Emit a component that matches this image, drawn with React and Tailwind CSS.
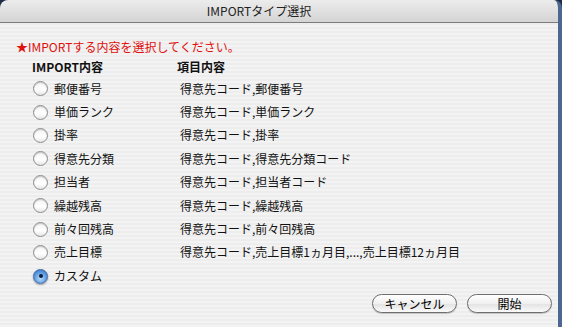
import React from 'react';

const rows = [
  ['郵便番号', '得意先コード,郵便番号'],
  ['単価ランク', '得意先コード,単価ランク'],
  ['掛率', '得意先コード,掛率'],
  ['得意先分類', '得意先コード,得意先分類コード'],
  ['担当者', '得意先コード,担当者コード'],
  ['繰越残高', '得意先コード,繰越残高'],
  ['前々回残高', '得意先コード,前々回残高'],
  ['売上目標', '得意先コード,売上目標1ヵ月目,...,売上目標12ヵ月目'],
];

function Radio({ checked }) {
  if (checked) {
    return (
      <span className="w-[15px] h-[15px] rounded-full border border-[#3a64a8] bg-[radial-gradient(circle_at_50%_65%,#b9dcfb_0%,#5d9be0_55%,#2f6cc0_100%)] shadow-[0_1px_2px_rgba(0,0,0,0.35)] flex items-center justify-center">
        <span className="w-[4px] h-[4px] rounded-full bg-[#0d1d3a]" />
      </span>
    );
  }
  return (
    <span className="w-[15px] h-[15px] rounded-full border border-[#8d8d8d] bg-[linear-gradient(to_bottom,#f4f4f4,#ffffff_60%,#e6e6e6)] shadow-[inset_0_1px_1px_rgba(0,0,0,0.2)]" />
  );
}

function Button({ children }) {
  return (
    <button className="w-[85px] h-[19px] rounded-full border border-[#6e6e6e] bg-[linear-gradient(to_bottom,#ffffff,#f0f0f0_50%,#e2e2e2_51%,#fafafa)] text-[12px] text-black flex items-center justify-center shadow-[0_1px_1px_rgba(0,0,0,0.2)]">
      {children}
    </button>
  );
}

export default function App() {
  return (
    <div
      className="w-[562px] h-[327px] bg-[#1d2b45] overflow-hidden"
      style={{ fontFamily: '"Noto Sans CJK JP", "Liberation Sans", sans-serif' }}
    >
      <div className="h-full flex flex-col rounded-t-[8px] overflow-hidden border-r-[4px] border-[#4c6790]">
        <div className="h-[23px] shrink-0 bg-[linear-gradient(to_bottom,#ececec,#d4d4d4)] border-b border-[#7c7c7c] flex items-center justify-center pr-[40px] text-[12px] text-[#222]">
          IMPORTタイプ選択
        </div>
        <div className="flex-1 bg-[repeating-linear-gradient(to_bottom,#ededed_0px,#ededed_2px,#f3f3f3_2px,#f3f3f3_4px)] flex flex-col">
          <div className="h-[15px] mt-[16px] pl-[16px] text-[12px] leading-[15px] text-[#e0100c]">
            ★IMPORTする内容を選択してください。
          </div>
          <div className="mt-[5px] h-[16px] flex items-center text-[12px] font-bold text-[#111]">
            <span className="w-[177px] pl-[32px]">IMPORT内容</span>
            <span>項目内容</span>
          </div>
          <div className="mt-[2px] flex flex-col">
            {rows.map(([name, desc]) => (
              <div key={name} className="h-[23.4px] flex items-center text-[12px] text-[#111]">
                <div className="w-[180px] pl-[33px] flex items-center gap-[6px]">
                  <Radio />
                  <span>{name}</span>
                </div>
                <span>{desc}</span>
              </div>
            ))}
            <div className="h-[24px] flex items-center text-[12px] text-[#111]">
              <div className="pl-[33px] flex items-center gap-[6px]">
                <Radio checked />
                <span>カスタム</span>
              </div>
            </div>
          </div>
          <div className="mt-[6px] flex justify-end gap-[10px] pr-[6px]">
            <Button>キャンセル</Button>
            <Button>開始</Button>
          </div>
        </div>
      </div>
    </div>
  );
}
